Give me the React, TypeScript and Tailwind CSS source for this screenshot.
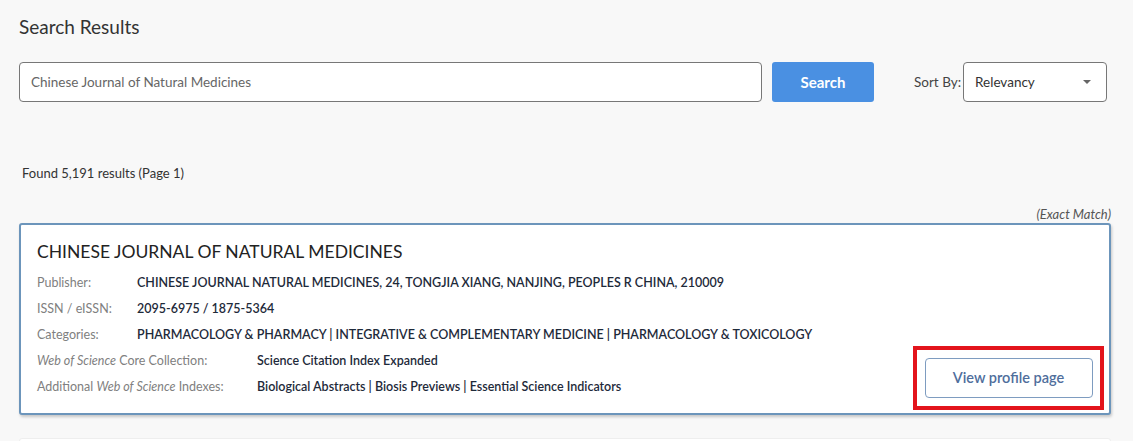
const rows = [
  { label: <>Publisher:</>, value: "CHINESE JOURNAL NATURAL MEDICINES, 24, TONGJIA XIANG, NANJING, PEOPLES R CHINA, 210009", wide: false },
  { label: <>ISSN / eISSN:</>, value: "2095-6975 / 1875-5364", wide: false },
  { label: <>Categories:</>, value: "PHARMACOLOGY & PHARMACY | INTEGRATIVE & COMPLEMENTARY MEDICINE | PHARMACOLOGY & TOXICOLOGY", wide: false },
  {
    label: (
      <>
        <i>Web of Science</i> Core Collection:
      </>
    ),
    value: "Science Citation Index Expanded",
    wide: true,
  },
  {
    label: (
      <>
        Additional <i>Web of Science</i> Indexes:
      </>
    ),
    value: "Biological Abstracts | Biosis Previews | Essential Science Indicators",
    wide: true,
  },
];

export default function App() {
  return (
    <div
      className="h-[441px] w-[1133px] overflow-hidden bg-[#f8f8f8] text-[#333]"
      style={{ fontFamily: "Lato, 'Open Sans', sans-serif" }}
    >
      <div className="pl-[19px] pr-[22px] pt-[14px]">
        <h1 className="text-[19px] leading-[26px] text-[#333]">Search Results</h1>

        {/* search bar */}
        <div className="mt-[22px] flex items-center">
          <div className="flex h-[40px] w-[743px] items-center rounded-[4px] border border-[#777] bg-white px-[11px] text-[13.5px] text-[#666]">
            Chinese Journal of Natural Medicines
          </div>
          <button
            type="button"
            className="ml-[10px] h-[40px] w-[102px] rounded-[3px] bg-[#4a90e2] text-[15px] font-bold text-white"
          >
            Search
          </button>
          <span className="ml-[40px] whitespace-nowrap text-[13.5px] text-[#444]">Sort By:</span>
          <div className="ml-[2px] flex h-[40px] w-[144px] items-center justify-between rounded-[4px] border border-[#777] bg-white pl-[11px] pr-[15px] text-[13.5px] text-[#333]">
            Relevancy
            <svg width="8" height="4" viewBox="0 0 8 4">
              <path d="M0 0h8L4 4z" fill="#666" />
            </svg>
          </div>
        </div>

        <p className="mt-[62px] pl-[3px] text-[13px] text-[#333]">Found 5,191 results (Page 1)</p>

        <p className="mt-[21px] text-right text-[13px] italic leading-[18px] text-[#555]">(Exact Match)</p>

        {/* result card */}
        <div className="relative h-[192px] rounded-[3px] border-2 border-[#6c95bb] bg-white px-[16px] pt-[15px] shadow-[1px_2px_3px_rgba(0,0,0,0.2)]">
          <h2 className="text-[17.5px] leading-[24px] text-[#222]">CHINESE JOURNAL OF NATURAL MEDICINES</h2>
          <div className="mt-[7px] text-[12.5px]">
            {rows.map((r, i) => (
              <div key={i} className="flex h-[26px] items-center">
                <span className={`${r.wide ? "w-[220px]" : "w-[100px]"} shrink-0 text-[#808080]`}>{r.label}</span>
                <span className="font-semibold text-[#1e2a3a]">{r.value}</span>
              </div>
            ))}
          </div>

          {/* highlighted button */}
          <div className="absolute right-[5px] top-[121px] flex h-[64px] w-[191px] items-center justify-center border-4 border-[#e3141c]">
            <button
              type="button"
              className="h-[40px] w-[168px] rounded-[4px] border border-[#7e9cc0] bg-white text-[14.5px] font-semibold text-[#4f6e9c]"
            >
              View profile page
            </button>
          </div>
        </div>

        <div className="mt-[23px] h-[40px] rounded-[3px] border border-[#eee] bg-white" />
      </div>
    </div>
  );
}
